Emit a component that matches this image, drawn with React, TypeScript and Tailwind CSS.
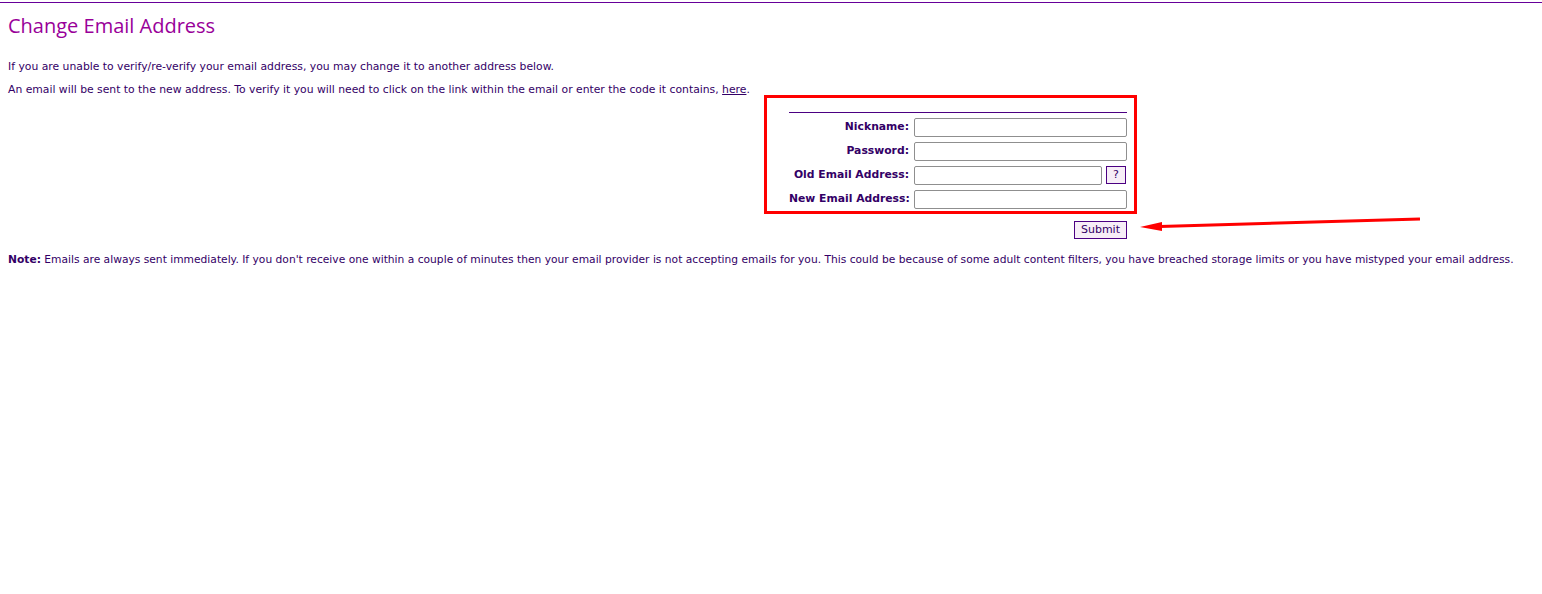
import React from "react";

const txt = "text-[#330066]";

function Field({ label, children }: { label: string; children: React.ReactNode }) {
  return (
    <div className="flex items-center h-[24px]">
      <label className="w-[125px] whitespace-nowrap text-right pr-[5px] font-bold text-[10.8px] pt-[1px]">{label}</label>
      <div className="flex items-center gap-[4px]">{children}</div>
    </div>
  );
}

function Input({ w }: { w: string }) {
  return <input className={`${w} h-[19px] border border-[#8f8f8f] rounded-[2px] bg-white`} />;
}

export default function App() {
  return (
    <div
      className={`min-h-[594px] bg-white ${txt} text-[10.8px]`}
      style={{ fontFamily: '"DejaVu Sans", Verdana, sans-serif' }}
    >
      <div className="h-[2px]" />
      <div className="h-[1px] bg-[#660099]" />
      <div className="px-[8px]">
        <h1
          className="text-[20px] leading-[24px] text-[#990099] mt-[11px]"
          style={{ fontFamily: '"Open Sans", "DejaVu Sans", sans-serif' }}
        >
          Change Email Address
        </h1>
        <p className="mt-[22px] leading-[14px]">
          If you are unable to verify/re-verify your email address, you may change it to another address below.
        </p>
        <p className="mt-[9px] leading-[14px]">
          An email will be sent to the new address. To verify it you will need to click on the link within the email or enter the code it contains,{" "}
          <a className="underline">here</a>.
        </p>
        <div className="relative ml-[756px] mt-[-2px] w-[373px]">
          <div className="border-[3px] border-[#ff0000] w-[373px] h-[119px] absolute left-0 top-0 pointer-events-none" />
          <div className="pt-[17px] pl-[25px] w-[363px]">
            <div className="h-[1px] bg-[#4b0082] w-[338px]" />
            <div className="pt-[2px]">
              <Field label="Nickname:"><Input w="w-[213px]" /></Field>
              <Field label="Password:"><Input w="w-[213px]" /></Field>
              <Field label="Old Email Address:">
                <Input w="w-[188px]" />
                <button className="w-[20px] h-[18px] border border-[#4b0082] bg-[#f7eef7] text-[11px] leading-[14px] text-[#330066]">?</button>
              </Field>
              <Field label="New Email Address:"><Input w="w-[213px]" /></Field>
            </div>
          </div>
          <div className="flex justify-end w-[363px] mt-[10px]">
            <button className="h-[18px] px-[6px] border border-[#4b0082] bg-[#f7eef7] text-[11px] leading-[14px] text-[#330066]">Submit</button>
          </div>
          <svg className="absolute left-[376px] top-[119px]" width="290" height="20" viewBox="0 0 290 20">
            <line x1="20" y1="12.5" x2="280" y2="5" stroke="#ff0000" strokeWidth="3" />
            <polygon points="0,13 22,8 22,17" fill="#ff0000" />
          </svg>
        </div>
        <p className="mt-[14px] leading-[14px] whitespace-nowrap text-[10.7px]">
          <b>Note:</b> Emails are always sent immediately. If you don't receive one within a couple of minutes then your email provider is not accepting emails for you. This could be because of some adult content filters, you have breached storage limits or you have mistyped your email address.
        </p>
      </div>
    </div>
  );
}
